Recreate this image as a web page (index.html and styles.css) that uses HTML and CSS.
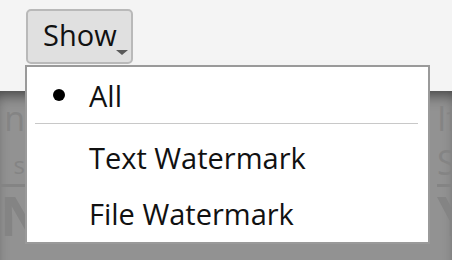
FILE: index.html
```html
<!DOCTYPE html>
<html lang="en">
<head>
  <meta charset="UTF-8" />
  <meta name="viewport" content="width=device-width, initial-scale=1.0" />
  <title>Show filter</title>
  <link rel="stylesheet" href="styles.css">
</head>
<body>
  <div class="toolbar">
    <button class="show-btn">Show<span class="caret"></span></button>
  </div>

  <div class="backdrop">
    <div class="page">
      <div class="col col-left">
        <p class="faint">n</p>
        <p class="faint link small">s</p>
        <p class="faint big">NS</p>
      </div>
      <div class="col col-right">
        <p class="faint">If</p>
        <p class="faint link">St</p>
        <p class="faint big">Y</p>
      </div>
    </div>
  </div>

  <ul class="menu">
    <li class="item selected"><span class="dot"></span>All</li>
    <li class="sep"></li>
    <li class="item">Text Watermark</li>
    <li class="item">File Watermark</li>
  </ul>
</body>
</html>
```

FILE: styles.css
```css
* { margin: 0; padding: 0; box-sizing: border-box; }
body {
  font-family: "Open Sans", "Noto Sans", sans-serif;
  width: 452px;
  height: 260px;
  overflow: hidden;
  position: relative;
  background: #929292;
  color: #111;
}
.toolbar {
  height: 91px;
  background: #f4f4f4;
  padding: 9px 0 0 26px;
}
.show-btn {
  position: relative;
  width: 107px;
  height: 55px;
  font-family: inherit;
  font-size: 29px;
  text-align: left;
  padding: 0 0 4px 15px;
  color: #111;
  background: #e0e0e0;
  border: 2px solid #b9b9b9;
  border-radius: 5px;
}
.caret {
  position: absolute;
  right: 3px;
  bottom: 7px;
  border-left: 6px solid transparent;
  border-right: 6px solid transparent;
  border-top: 5px solid #5a5a5a;
}
.backdrop {
  height: 169px;
  background: #929292;
  box-shadow: inset 0 10px 14px -6px rgba(0,0,0,0.55);
  overflow: hidden;
}
.page {
  display: flex;
  justify-content: space-between;
  padding-top: 5px;
}
.col-left {
  width: 25px;
  text-align: right;
}
.col-right { width: 15px; }
.faint {
  color: #848484;
  font-size: 34px;
  line-height: 44px;
  white-space: nowrap;
}
.link {
  border-bottom: 3px solid #848484;
}
.small {
  font-size: 24px;
  line-height: 39px;
  padding-top: 5px;
}
.big {
  font-size: 54px;
  font-weight: 700;
  line-height: 56px;
}
.col-left .big { letter-spacing: -2px; }
.menu {
  position: absolute;
  left: 25px;
  top: 65px;
  width: 405px;
  height: 179px;
  list-style: none;
  background: #fff;
  border: 2px solid #9a9a9a;
}
.item {
  display: flex;
  align-items: center;
  height: 56px;
  padding-left: 62px;
  font-size: 29px;
  color: #111;
}
.item.selected { position: relative; }
.dot {
  position: absolute;
  left: 26px;
  top: 22px;
  width: 12px;
  height: 12px;
  border-radius: 50%;
  background: #000;
}
.sep {
  height: 1px;
  margin: 0 10px 5px 8px;
  background: #c8c8c8;
}
```
